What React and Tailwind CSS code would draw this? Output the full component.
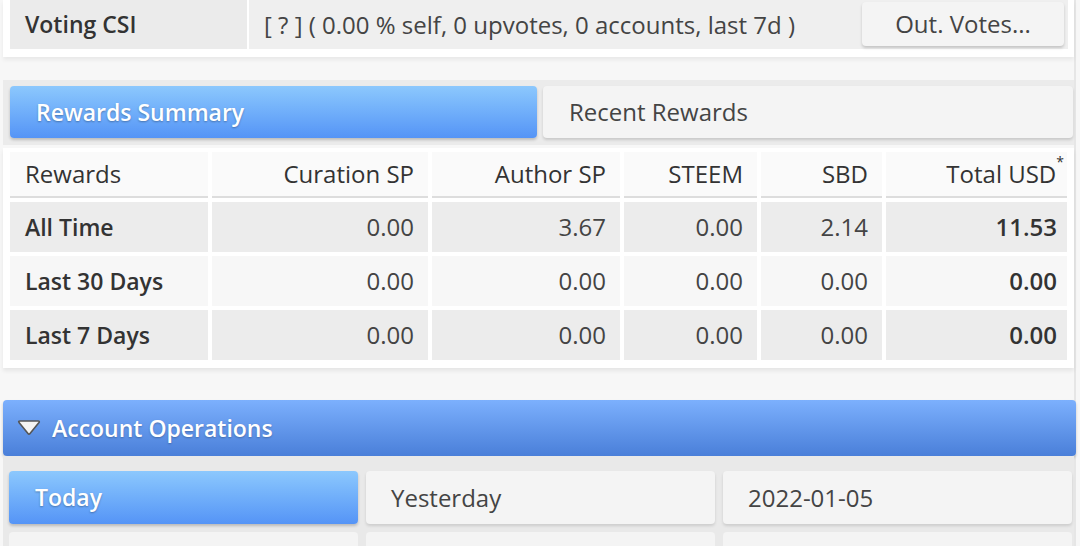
import React from 'react';

const rows = [
  { label: 'All Time', values: ['0.00', '3.67', '0.00', '2.14'], total: '11.53', bg: 'bg-[#ececec]' },
  { label: 'Last 30 Days', values: ['0.00', '0.00', '0.00', '0.00'], total: '0.00', bg: 'bg-[#f7f7f7]' },
  { label: 'Last 7 Days', values: ['0.00', '0.00', '0.00', '0.00'], total: '0.00', bg: 'bg-[#ececec]' },
];

const headers = ['Curation SP', 'Author SP', 'STEEM', 'SBD'];

const App = () => {
  return (
    <div className="w-[1080px] h-[546px] overflow-hidden bg-[#f7f7f7] font-['Open_Sans',sans-serif] text-[#333]">
      <div className="ml-[3px] mr-[4px] h-full border-r-2 border-[#e6e6e6]">
        {/* Voting CSI panel */}
        <div className="bg-white pl-[7px] pr-[6px] pb-[8px] shadow-[0_3px_4px_rgba(0,0,0,0.06)]">
          <div className="flex h-[49px] gap-[2px]">
            <div className="w-[237px] bg-[#ebebeb] flex items-center pl-[15px] text-[23px] font-semibold">
              Voting CSI
            </div>
            <div className="flex-1 bg-[#efefef] flex items-center justify-between pl-[15px] pr-[4px]">
              <span className="text-[24px] text-[#444]">[ ? ] ( 0.00 % self, 0 upvotes, 0 accounts, last 7d )</span>
              <button className="h-[44px] w-[202px] mb-[2px] bg-[#f4f4f4] rounded-[4px] shadow-[0_2px_3px_rgba(0,0,0,0.18)] text-[24px] text-[#444]">
                Out. Votes...
              </button>
            </div>
          </div>
        </div>

        {/* Tabs */}
        <div className="mt-[23px] bg-[#ebebeb] pl-[7px] pr-[1px] pt-[6px] pb-[7px] flex gap-[6px]">
          <button className="w-[527px] h-[52px] rounded-[4px] bg-gradient-to-b from-[#8cc8fd] to-[#5594f6] shadow-[0_2px_3px_rgba(0,0,0,0.2)] text-left pl-[26px] text-white text-[23px] font-semibold [text-shadow:0_1px_2px_rgba(0,0,0,0.3)]">
            Rewards Summary
          </button>
          <button className="flex-1 h-[52px] rounded-[4px] bg-[#f4f4f4] shadow-[0_2px_3px_rgba(0,0,0,0.15)] text-left pl-[26px] text-[#444] text-[24px]">
            Recent Rewards
          </button>
        </div>

        {/* Rewards table */}
        <div className="mt-[3px] bg-white pl-[7px] pr-[6px] pt-[4px] pb-[8px] shadow-[0_3px_4px_rgba(0,0,0,0.07)]">
          <div className="grid grid-cols-[198px_216px_188px_133px_121px_181px] gap-x-[4px] gap-y-[4px] text-[24px]">
            <div className="h-[46px] bg-[#fafafa] border-b-2 border-[#dddddd] flex items-center pl-[15px] font-medium">Rewards</div>
            {headers.map((h) => (
              <div key={h} className="h-[46px] bg-[#fafafa] border-b-2 border-[#dddddd] flex items-center justify-end pr-[14px] font-medium">{h}</div>
            ))}
            <div className="h-[46px] bg-[#fafafa] border-b-2 border-[#dddddd] flex items-center justify-end pr-[3px] font-medium">
              Total USD<sup className="text-[14px] -mt-[10px]">*</sup>
            </div>
            {rows.map((r) => (
              <React.Fragment key={r.label}>
                <div className={`h-[50px] ${r.bg} flex items-center pl-[15px] text-[23px] font-semibold`}>{r.label}</div>
                {r.values.map((v, i) => (
                  <div key={i} className={`h-[50px] ${r.bg} flex items-center justify-end pr-[14px] text-[#444]`}>{v}</div>
                ))}
                <div className={`h-[50px] ${r.bg} flex items-center justify-end pr-[10px] font-semibold`}>{r.total}</div>
              </React.Fragment>
            ))}
          </div>
        </div>

        {/* Account Operations */}
        <div className="mt-[32px] -mr-[2px] h-[56px] rounded-[4px] bg-gradient-to-b from-[#7cb0fd] to-[#4a7fd9] shadow-[0_2px_3px_rgba(0,0,0,0.2)] flex items-center pl-[13px] gap-[10px]">
          <svg width="26" height="20" viewBox="0 0 26 20">
            <path d="M3 4 Q2 3 4 3 L22 3 Q24 3 23 4.5 L14 15.5 Q13 17 12 15.5 L3 4.5 Z" fill="#f4f4f4" stroke="#555" strokeWidth="1.6" strokeLinejoin="round" />
          </svg>
          <span className="text-white text-[23px] font-semibold [text-shadow:0_1px_2px_rgba(0,0,0,0.25)]">Account Operations</span>
        </div>
        <div className="bg-[#e9e9e9] pl-[6px] pr-[2px] pt-[15px] pb-[20px] grid grid-cols-3 gap-x-[8px] gap-y-[8px]">
          <button className="h-[53px] rounded-[4px] bg-gradient-to-b from-[#8cc8fd] to-[#5594f6] shadow-[0_2px_3px_rgba(0,0,0,0.2)] text-left pl-[26px] text-white text-[23px] font-semibold [text-shadow:0_1px_2px_rgba(0,0,0,0.3)]">
            Today
          </button>
          <button className="h-[53px] rounded-[4px] bg-[#f4f4f4] shadow-[0_2px_3px_rgba(0,0,0,0.12)] text-left pl-[25px] text-[#444] text-[24px]">
            Yesterday
          </button>
          <button className="h-[53px] rounded-[4px] bg-[#f4f4f4] shadow-[0_2px_3px_rgba(0,0,0,0.12)] text-left pl-[25px] text-[#444] text-[24px]">
            2022-01-05
          </button>
          <div className="h-[53px] rounded-[4px] bg-[#f4f4f4]" />
          <div className="h-[53px] rounded-[4px] bg-[#f4f4f4]" />
          <div className="h-[53px] rounded-[4px] bg-[#f4f4f4]" />
        </div>
      </div>
    </div>
  );
};

export default App;
